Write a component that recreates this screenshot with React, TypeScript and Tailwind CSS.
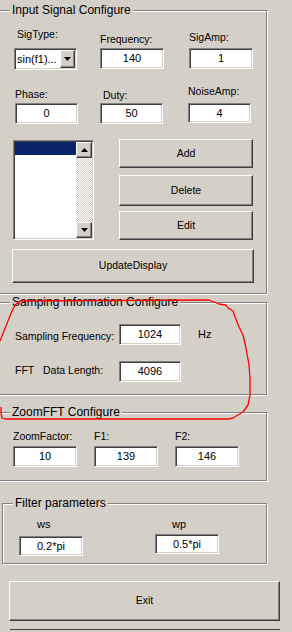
const panel =
  "relative border border-[#808080] shadow-[inset_1px_1px_0_#fff,1px_1px_0_#fff]";
const title =
  "absolute top-[-8px] bg-[#d4d0c8] px-[2px] text-[12px] leading-[14px] whitespace-nowrap";
const label = "block text-[10.5px] leading-[14px] whitespace-nowrap";
const field =
  "flex items-center justify-center bg-white border border-t-[#808080] border-l-[#808080] border-r-white border-b-white shadow-[inset_1px_1px_0_#404040,inset_-1px_-1px_0_#d4d0c8] text-[11px] leading-none";
const button =
  "flex items-center justify-center bg-[#d4d0c8] border border-t-white border-l-white border-r-[#404040] border-b-[#404040] shadow-[inset_-1px_-1px_0_#808080] text-[10.5px]";

function Arrow({ up }: { up?: boolean }) {
  return (
    <svg width="7" height="4" viewBox="0 0 7 4">
      {up ? <path d="M3.5 0 L7 4 L0 4 Z" fill="#000" /> : <path d="M0 0 L7 0 L3.5 4 Z" fill="#000" />}
    </svg>
  );
}

function Field({ value, className }: { value: string; className: string }) {
  return <div className={`${field} ${className}`}>{value}</div>;
}

export default function App() {
  return (
    <div className="relative w-[292px] h-[632px] overflow-hidden bg-[#d4d0c8] text-black font-['Liberation_Sans',Arial,sans-serif]">
      <div className="flex flex-col">
        {/* Input Signal Configure */}
        <div className={`${panel} ml-[-2px] mt-[10px] w-[269px] h-[284px]`}>
          <span className={`${title} left-[11px]`}>Input Signal Configure</span>

          <div className="flex items-start pl-[15px]">
            <div className="flex flex-col w-[63px]">
              <span className={`${label} mt-[16px] pl-[3px]`}>SigType:</span>
              <div className={`${field} mt-[7px] h-[22px] !justify-between pl-[2px] pr-[1px]`}>
                <span className="text-[11px]">sin(f1)...</span>
                <div className={`${button} w-[15px] h-[18px]`}>
                  <Arrow />
                </div>
              </div>
            </div>
            <div className="flex flex-col w-[64px] ml-[23px]">
              <span className={`${label} mt-[21px]`}>Frequency:</span>
              <Field value="140" className="mt-[2px] h-[21px]" />
            </div>
            <div className="flex flex-col w-[64px] ml-[25px]">
              <span className={`${label} mt-[19px]`}>SigAmp:</span>
              <Field value="1" className="mt-[4px] h-[21px]" />
            </div>
          </div>

          <div className="flex items-start pl-[16px]">
            <div className="flex flex-col w-[63px]">
              <span className={`${label} mt-[17px]`}>Phase:</span>
              <Field value="0" className="mt-[2px] h-[21px]" />
            </div>
            <div className="flex flex-col w-[63px] ml-[22px]">
              <span className={`${label} mt-[18px] pl-[3px]`}>Duty:</span>
              <Field value="50" className="mt-[1px] h-[21px]" />
            </div>
            <div className="flex flex-col w-[63px] ml-[25px]">
              <span className={`${label} mt-[14px]`}>NoiseAmp:</span>
              <Field value="4" className="mt-[5px] h-[20px]" />
            </div>
          </div>

          <div className="flex items-start pl-[14px] mt-[15px]">
            <div className="mt-[1px] w-[81px] h-[100px] flex bg-white border border-t-[#808080] border-l-[#808080] border-r-white border-b-white shadow-[inset_1px_1px_0_#404040,inset_-1px_-1px_0_#d4d0c8] p-[1px]">
              <div className="flex-1">
                <div className="h-[13px] bg-[#0a246a]" />
              </div>
              <div className="flex flex-col w-[16px] bg-[repeating-conic-gradient(#d4d0c8_0_25%,#fff_0_50%)] bg-size-[2px_2px]">
                <div className={`${button} h-[16px]`}>
                  <Arrow up />
                </div>
                <div className="flex-1" />
                <div className={`${button} h-[16px]`}>
                  <Arrow />
                </div>
              </div>
            </div>
            <div className="flex flex-col w-[134px] ml-[25px]">
              <div className={`${button} h-[29px]`}>Add</div>
              <div className={`${button} h-[31px] mt-[7px]`}>Delete</div>
              <div className={`${button} h-[29px] mt-[5px]`}>Edit</div>
            </div>
          </div>

          <div className={`${button} ml-[13px] mt-[9px] w-[242px] h-[34px]`}>UpdateDisplay</div>
        </div>

        {/* Samping Information Configure */}
        <div className={`${panel} ml-[-2px] mt-[8px] w-[269px] h-[93px]`}>
          <span className={`${title} left-[11px]`}>Samping Information Configure</span>
          <div className="flex items-start pl-[16px] mt-[21px]">
            <span className={`${label} w-[104px] mt-[5px]`}>Sampling Frequency:</span>
            <Field value="1024" className="w-[62px] h-[21px]" />
            <span className={`${label} ml-[17px] mt-[3px] text-[11px]`}>Hz</span>
          </div>
          <div className="flex items-start pl-[16px] mt-[16px]">
            <span className={`${label} w-[28px] mt-[2px]`}>FFT</span>
            <span className={`${label} w-[76px] mt-[2px]`}>Data Length:</span>
            <Field value="4096" className="w-[62px] h-[21px]" />
          </div>
        </div>

        {/* ZoomFFT Configure */}
        <div className={`${panel} ml-[-2px] mt-[17px] w-[269px] h-[69px]`}>
          <span className={`${title} left-[11px]`}>ZoomFFT Configure</span>
          <div className="flex items-start gap-[17px] pl-[14px]">
            <div className="flex flex-col w-[64px]">
              <span className={`${label} mt-[16px]`}>ZoomFactor:</span>
              <Field value="10" className="mt-[3px] h-[21px]" />
            </div>
            <div className="flex flex-col w-[64px]">
              <span className={`${label} mt-[16px]`}>F1:</span>
              <Field value="139" className="mt-[3px] h-[21px]" />
            </div>
            <div className="flex flex-col w-[64px]">
              <span className={`${label} mt-[16px]`}>F2:</span>
              <Field value="146" className="mt-[3px] h-[21px]" />
            </div>
          </div>
        </div>

        {/* Filter parameters */}
        <div className={`${panel} ml-[2px] mt-[22px] w-[265px] h-[61px]`}>
          <span className={`${title} left-[10px]`}>Filter parameters</span>
          <div className="flex items-start pl-[16px]">
            <div className="flex flex-col w-[64px]">
              <span className={`${label} mt-[13px] pl-[18px] text-[11px]`}>ws</span>
              <Field value="0.2*pi" className="mt-[5px] h-[20px]" />
            </div>
            <div className="flex flex-col w-[64px] ml-[72px]">
              <span className={`${label} mt-[13px] pl-[17px] text-[11px]`}>wp</span>
              <Field value="0.5*pi" className="mt-[3px] h-[20px]" />
            </div>
          </div>
        </div>

        <div className={`${button} ml-[9px] mt-[17px] w-[271px] h-[40px]`}>Exit</div>
        <div className="ml-[10px] mt-[8px] w-[270px] h-px bg-[#404040]" />
      </div>

      {/* red hand-drawn annotation */}
      <svg className="absolute inset-0 pointer-events-none" width="292" height="632" viewBox="0 0 292 632">
        <path
          d="M0 341 L4 331 L8 321 L12 311 L15 305 L20 301 L209 300 L214 302 L219 304 L226 305 L228 308 L233 311 L235 317 L239 327 L243 335 L246 348 L249 365 L250 378 L250 395 L248 405 L243 412 L233 418 L229 419 L5 419 L2 418 L1 413 L1 407"
          fill="none"
          stroke="#ff0000"
          strokeWidth="1.3"
          strokeLinejoin="round"
        />
      </svg>
    </div>
  );
}
